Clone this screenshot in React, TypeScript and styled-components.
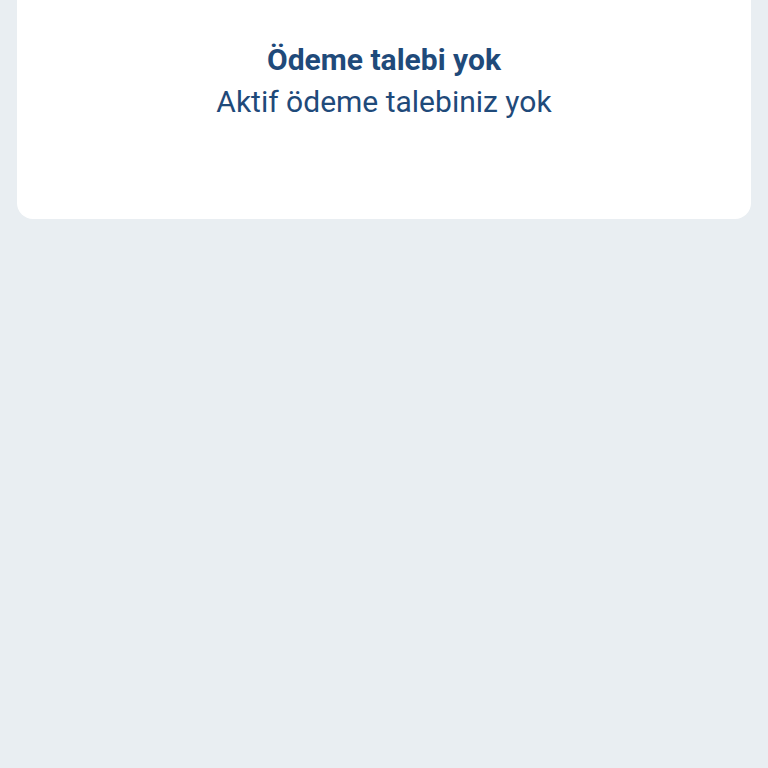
import React from "react";
import styled, { createGlobalStyle } from "styled-components";

const Global = createGlobalStyle`
  html, body { margin: 0; padding: 0; background: #e9eef2; }
  body { font-family: Roboto, "Noto Sans", sans-serif; }
`;

const Page = styled.div`
  min-height: 768px;
  padding: 0 17px;
  box-sizing: border-box;
  background: #e9eef2;
`;

const Card = styled.section`
  background: #ffffff;
  border-radius: 0 0 16px 16px;
  height: 219px;
  box-sizing: border-box;
  padding-top: 41px;
  display: flex;
  flex-direction: column;
  align-items: center;
  color: #1f4a7a;
`;

const Title = styled.h2`
  margin: 0;
  font-size: 30px;
  font-weight: 700;
  line-height: 38px;
`;

const Subtitle = styled.p`
  margin: 4px 0 0;
  font-size: 30px;
  font-weight: 400;
  line-height: 38px;
`;

export default function App() {
  return (
    <>
      <Global />
      <Page>
        <Card>
          <Title>Ödeme talebi yok</Title>
          <Subtitle>Aktif ödeme talebiniz yok</Subtitle>
        </Card>
      </Page>
    </>
  );
}
